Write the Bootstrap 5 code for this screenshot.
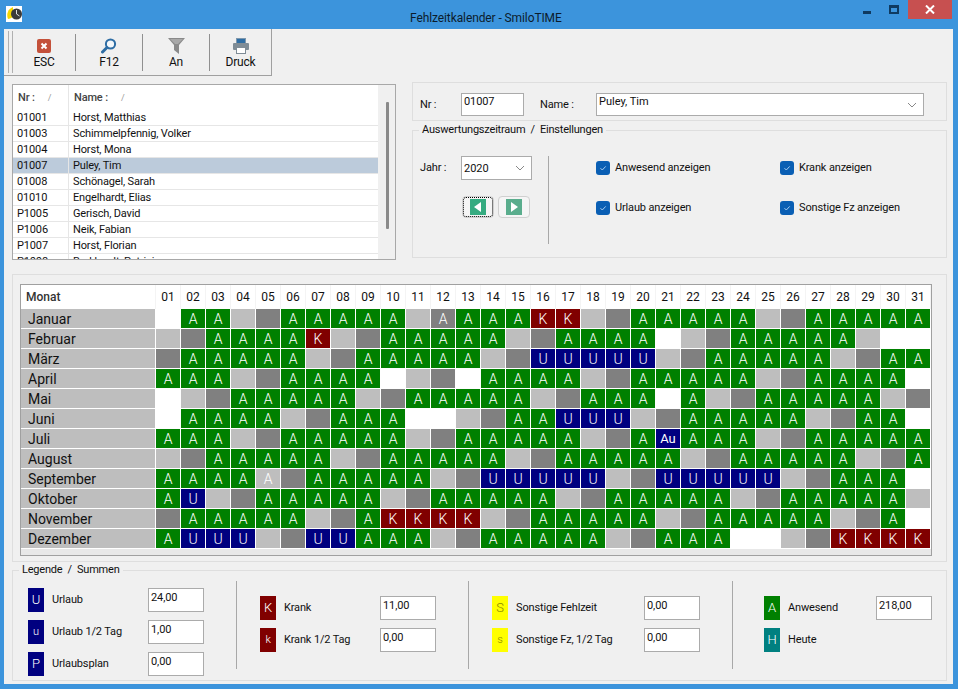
<!DOCTYPE html>
<html lang="de">
<head>
<meta charset="utf-8">
<title>Fehlzeitkalender - SmiloTIME</title>
<link href="https://cdn.jsdelivr.net/npm/bootstrap@5.3.0/dist/css/bootstrap.min.css" rel="stylesheet">
<style>
html,body{height:100%;overflow:hidden}
body{background:#3c94dc;font-family:Roboto,"Liberation Sans",sans-serif;font-size:11px;letter-spacing:-.15px;font-weight:400;color:#111;line-height:16px}
.titlebar{height:29px;position:relative}
.app-ico{margin:6px 0 0 6px}
.win-title{position:absolute;left:410px;top:10px;color:#0c1c2c;line-height:16px;font-size:12px;letter-spacing:-.1px}
.win-btns{margin-right:6px}
.win-close{width:44px;height:19px;background:#c75050}
.win-max{width:10px;height:9px;border:2px solid #0f3a60;border-top-width:3px;margin:5px 9px 0 0}
.win-min{width:8px;height:3px;background:#0f3a60;margin:11px 18px 0 0}
.content{background:#f0f0f0;margin:0 5px 0 4px;height:655px}
.tools{width:268px;height:47px;border-right:1px solid #a0a0a0;border-bottom:1px solid #a0a0a0}
.grip{width:5px;height:42px;margin:2px 0 0 4px;border-left:1px solid #b0b0b0;border-right:1px solid #b0b0b0;flex:none}
.tool{width:67px;height:37px;margin-top:5px;border-right:1px solid #909090;text-align:center;line-height:14px;flex:none;font-size:12px;letter-spacing:-.2px}
.tool svg{display:block;margin:4px auto 1px}
.tool svg.t14{margin:5px auto 2px}
.tool-first{width:63px}
.tool-last{border-right:0;width:61px}
.toprow{margin-top:6px}
.emp{width:384px;height:176px;margin:2px 16px 0 8px;border:1px solid #a8a8a8;background:#f0f0f0;position:relative;overflow:hidden;flex:none}
.emp-scroll{height:174px;overflow:hidden;width:365px;background:#fff}
.emp table{margin:0;width:365px;table-layout:fixed;border-collapse:separate;border-spacing:0;--bs-table-bg:transparent;color:#111}
.table.emp-t th,.table.emp-t td{padding:0 0 0 4px;height:16px;line-height:15px;border:0;border-bottom:1px solid #e6e6e6;font-weight:400;white-space:nowrap;overflow:hidden;box-shadow:none}
.table.emp-t td:first-child,.table.emp-t th:first-child{width:56px;border-right:1px solid #e6e6e6}
.table.emp-t thead th{height:25px;padding-left:5px;font-weight:500;border-bottom:0;color:#444;vertical-align:middle}
.table.emp-t .sel td{background:#bccbdb}
.sort{color:#999;font-size:9px;font-weight:400;margin-left:13px}
.sb{position:absolute;left:373px;top:17px;width:3px;height:127px;background:#8a8a8a;border-radius:1px}
.rightcol{width:535px;flex:none}
.pnl{border:1px solid #dedede}
.pnl-top{height:39px;margin-bottom:2px}
.lbl{display:block;white-space:nowrap}
.fld{border:1px solid #ababab;background:#fff;border-radius:0;padding:0 0 0 2px;font-size:11px;line-height:14px;color:#111;min-height:0;box-shadow:none;font-family:inherit;letter-spacing:-.1px}
.fld:focus{border-color:#ababab;box-shadow:none}
.fld-nr{width:63px;height:23px;margin:10px 0 0 0;padding-bottom:6px}
.fld-sum{width:56px;height:24px;padding-bottom:6px}
.combo{height:24px;border:1px solid #ababab;border-radius:0;padding:0 20px 8px 2px;font-size:11px;line-height:14px;color:#111;min-height:0;font-family:inherit;background-color:#fff;background-position:right 6px center;background-size:10px 6px;background-image:url("data:image/svg+xml,%3Csvg xmlns='http://www.w3.org/2000/svg' viewBox='0 0 10 6'%3E%3Cpath fill='none' stroke='%23888' d='M1 1l4 4 4-4'/%3E%3C/svg%3E")}
.combo-name{width:328px;height:23px;margin-top:10px;padding-bottom:6px}
.combo-year{width:71px;padding:1px 20px 0 2px;flex:none}
fieldset.grp{border:1px solid #dedede;padding:0;min-width:0}
fieldset.grp legend{float:none;width:auto;font-size:11px;line-height:14px;margin:0 0 0 6px;padding:0 3px;color:#111;letter-spacing:-.2px}
.grp-set{height:135px;margin:0}
.setbody{height:120px}
.yearcol{width:135px;padding:19px 0 0 7px;flex:none}
.sep-v{width:1px;background:#a8a8a8;flex:none}
.sep-set{height:88px;margin-top:19px}
.arrow-btn{width:32px;height:22px;background:#f5f5f5;border:1px solid #d0d0d0;border-radius:4px;padding:0;display:flex;align-items:center;justify-content:center}
.arrow-focus{outline:1px dotted #000;outline-offset:-2px}
.checks{margin:0 0 0 47px;width:345px;padding-top:24px;row-gap:26px;flex:none}
.chk{height:14px;margin:0;padding:0;min-height:0;width:160px}
.chk:nth-child(odd){width:184px}
.chk .form-check-input{width:14px;height:14px;margin:0 5px 0 0;float:none;border:0;border-radius:3px;background-color:#0a5fb4;background-size:10px;background-image:url("data:image/svg+xml,%3Csvg xmlns='http://www.w3.org/2000/svg' viewBox='0 0 10 10'%3E%3Cpath fill='none' stroke='%23a9cdf0' d='M2.5 5.2l1.8 1.8 3.4-3.6'/%3E%3C/svg%3E");flex:none}
.pnl-grid{height:288px;margin:14px 0 1px 8px;width:935px;padding:9px 0 0 7px}
.cal-wrap{width:912px;height:272px;border:1px solid #a0a0a0;background:#e8e8e8}
.table.cal{margin:0;width:910px;table-layout:fixed;border-collapse:separate;border-spacing:0;--bs-table-bg:transparent;letter-spacing:0;font-size:12px}
.table.cal th,.table.cal td{padding:0;height:20px;border:0;border-right:1px solid #fff;border-bottom:1px solid #fff;box-shadow:none;text-align:center;vertical-align:middle;background:#fff;font-weight:400;line-height:18px;overflow:hidden}
.table.cal tbody td{font-size:14px;font-weight:300;color:#fff}
.table.cal thead th{height:24px;background:#fff;border:0;border-right:1px solid #f4f4f4;color:#111}
.table.cal .mcol{width:135px;text-align:left}
.table.cal thead .mcol{padding-left:5px;font-weight:500;color:#333}
.table.cal tbody .mcol{padding-left:7px;background:#bebebe;color:#111;font-size:14px;font-weight:400}
.table.cal td.dA{background:#008000}
.table.cal td.dU{background:#000080}
.table.cal td.dK{background:#800000}
.table.cal td.dG{background:#bebebe}
.table.cal td.dD{background:#808080}
.table.cal td.dW{background:#fff}
.table.cal td.dS{font-size:13px;font-weight:400}
.leg-grp{margin:0 0 0 8px;width:935px;height:118px}
.leg-body{height:103px}
.leg-col{padding-left:15px}
.leg-row{height:24px;margin-bottom:8px}
.chip{width:16px;height:24px;display:flex;align-items:center;justify-content:center;color:#fff;font-size:13px;font-weight:300;margin-right:8px;flex:none}
.chip-sm{font-size:11px}
.c-u{background:#000080}.c-k{background:#800000}.c-y{background:#ff0;color:#8a8a00}.c-a{background:green}.c-h{background:teal}
.sep-leg{height:88px;margin-top:4px}
.w-a{width:223px;padding-top:11px;flex:none}
.w-b{width:231px;padding:19px 0 0 23px;flex:none}
.w-c{width:263px;padding:19px 0 0 23px;flex:none}
.w-d{padding:19px 0 0 31px}
.leg-txt{width:96px}
.leg-txt-k{width:96px}
.leg-txt-s{width:128px}
.leg-txt-a{width:88px}
</style>
</head>
<body>
<div class="titlebar d-flex justify-content-between">
  <svg class="app-ico" width="16" height="16" viewBox="0 0 16 16"><rect width="16" height="16" fill="#fff"/><path d="M7 1C2 3 0 8 2 13c1 0 3-1 5-2z" fill="#f5d800"/><circle cx="10.500" cy="8" r="5.500" fill="#3a3a3a"/><path d="M10.500 4v4l3 2" fill="none" stroke="#ddd"/></svg>
  <div class="win-title">Fehlzeitkalender - SmiloTIME</div>
  <div class="d-flex win-btns align-items-start">
    <div class="win-min"></div>
    <div class="win-max"></div>
    <div class="win-close d-flex align-items-center justify-content-center"><svg width="10" height="9" viewBox="0 0 10 9"><path d="M1 .5l8 8M9 .5l-8 8" stroke="#fff" stroke-width="2"/></svg></div>
  </div>
</div>
<div class="content">
  <div class="tools d-flex">
    <div class="grip"></div>
    <div class="tool tool-first"><svg class="t14" width="14" height="14" viewBox="0 0 14 14"><rect width="14" height="14" rx="2" fill="#c4513a"/><path d="M4.500 4.500l5 5M9.500 4.500l-5 5" stroke="#fff" stroke-width="2"/></svg>ESC</div>
    <div class="tool"><svg width="16" height="16" viewBox="0 0 16 16"><circle cx="9.500" cy="6" r="4.600" fill="#f4f8fb" stroke="#2e6da4" stroke-width="2"/><path d="M6 9.500L1.500 14" stroke="#2e6da4" stroke-width="3" stroke-linecap="round"/></svg>F12</div>
    <div class="tool"><svg width="17" height="16" viewBox="0 0 17 16"><path d="M0 0h17L11 7v9L6 12V7z" fill="#8a8a8a"/><path d="M2 1h13L10 6H7z" fill="#a8a8a8"/></svg>An</div>
    <div class="tool tool-last"><svg width="16" height="16" viewBox="0 0 16 16"><rect x="3.500" y=".5" width="9" height="5" fill="#2e6da4" stroke="#7f98ad"/><rect x="0" y="5" width="16" height="7" rx="1" fill="#7f8c96"/><rect x="3.500" y="9.500" width="9" height="6" fill="#fff" stroke="#7f8c96"/></svg>Druck</div>
  </div>
  <div class="toprow d-flex">
    <div class="emp">
      <div class="emp-scroll">
      <table class="table emp-t">
        <thead><tr><th>Nr :<span class="sort">/</span></th><th>Name :<span class="sort">/</span></th></tr></thead>
        <tbody>
          <tr><td>01001</td><td>Horst, Matthias</td></tr>
          <tr><td>01003</td><td>Schimmelpfennig, Volker</td></tr>
          <tr><td>01004</td><td>Horst, Mona</td></tr>
          <tr class="sel"><td>01007</td><td>Puley, Tim</td></tr>
          <tr><td>01008</td><td>Schönagel, Sarah</td></tr>
          <tr><td>01010</td><td>Engelhardt, Elias</td></tr>
          <tr><td>P1005</td><td>Gerisch, David</td></tr>
          <tr><td>P1006</td><td>Neik, Fabian</td></tr>
          <tr><td>P1007</td><td>Horst, Florian</td></tr>
          <tr><td>P1008</td><td>Burkhardt, Patricia</td></tr>
        </tbody>
      </table>
      </div>
      <div class="sb"></div>
    </div>
    <div class="rightcol">
      <div class="pnl pnl-top d-flex">
        <span class="lbl nr-l" style="margin:14px 0 0 7px;width:41px">Nr :</span>
        <input class="form-control fld fld-nr" value="01007">
        <span class="lbl" style="margin:14px 0 0 16px;width:56px">Name :</span>
        <select class="form-select combo combo-name"><option>Puley, Tim</option></select>
      </div>
      <fieldset class="grp grp-set">
        <legend>Auswertungszeitraum&nbsp; /&nbsp; Einstellungen</legend>
        <div class="setbody d-flex">
          <div class="yearcol">
            <div class="d-flex"><span class="lbl" style="width:41px;margin-top:4px">Jahr :</span><select class="form-select combo combo-year"><option>2020</option></select></div>
            <div class="d-flex gap-1" style="margin:16px 0 0 42px">
              <button class="arrow-btn arrow-focus" type="button" aria-label="Zurück"><svg width="16" height="16" viewBox="0 0 16 16"><rect width="16" height="16" fill="#35ab80"/><path d="M11 3v10L4 8z" fill="#fff"/></svg></button>
              <button class="arrow-btn" type="button" aria-label="Vor"><svg width="16" height="16" viewBox="0 0 16 16"><rect width="16" height="16" fill="#5aad8d"/><path d="M5 3v10l7-5z" fill="#fff"/></svg></button>
            </div>
          </div>
          <div class="sep-v sep-set"></div>
          <div class="checks d-flex flex-wrap align-content-start">
            <div class="form-check chk d-flex align-items-center"><input class="form-check-input" type="checkbox" checked id="c1"><label for="c1">Anwesend anzeigen</label></div>
            <div class="form-check chk d-flex align-items-center"><input class="form-check-input" type="checkbox" checked id="c2"><label for="c2">Krank anzeigen</label></div>
            <div class="form-check chk d-flex align-items-center"><input class="form-check-input" type="checkbox" checked id="c3"><label for="c3">Urlaub anzeigen</label></div>
            <div class="form-check chk d-flex align-items-center"><input class="form-check-input" type="checkbox" checked id="c4"><label for="c4">Sonstige Fz anzeigen</label></div>
          </div>
        </div>
      </fieldset>
    </div>
  </div>
  <div class="pnl pnl-grid">
    <div class="cal-wrap">
      <table class="table cal">
        <thead><tr id="calhead"><th class="mcol">Monat</th></tr></thead>
        <tbody id="calbody"></tbody>
      </table>
    </div>
  </div>
  <fieldset class="grp leg-grp">
    <legend>Legende&nbsp; /&nbsp; Summen</legend>
    <div class="leg-body d-flex">
      <div class="w-a leg-col">
        <div class="leg-row d-flex align-items-center"><span class="chip c-u">U</span><span class="leg-txt">Urlaub</span><input class="form-control fld fld-sum" value="24,00"></div>
        <div class="leg-row d-flex align-items-center"><span class="chip chip-sm c-u">u</span><span class="leg-txt">Urlaub 1/2 Tag</span><input class="form-control fld fld-sum" value="1,00"></div>
        <div class="leg-row d-flex align-items-center"><span class="chip c-u">P</span><span class="leg-txt">Urlaubsplan</span><input class="form-control fld fld-sum" value="0,00"></div>
      </div>
      <div class="sep-v sep-leg"></div>
      <div class="w-b">
        <div class="leg-row d-flex align-items-center"><span class="chip c-k">K</span><span class="leg-txt-k">Krank</span><input class="form-control fld fld-sum" value="11,00"></div>
        <div class="leg-row d-flex align-items-center"><span class="chip chip-sm c-k">k</span><span class="leg-txt-k">Krank 1/2 Tag</span><input class="form-control fld fld-sum" value="0,00"></div>
      </div>
      <div class="sep-v sep-leg"></div>
      <div class="w-c">
        <div class="leg-row d-flex align-items-center"><span class="chip c-y">S</span><span class="leg-txt-s">Sonstige Fehlzeit</span><input class="form-control fld fld-sum" value="0,00"></div>
        <div class="leg-row d-flex align-items-center"><span class="chip chip-sm c-y">s</span><span class="leg-txt-s">Sonstige Fz, 1/2 Tag</span><input class="form-control fld fld-sum" value="0,00"></div>
      </div>
      <div class="sep-v sep-leg"></div>
      <div class="w-d">
        <div class="leg-row d-flex align-items-center"><span class="chip c-a">A</span><span class="leg-txt-a">Anwesend</span><input class="form-control fld fld-sum" value="218,00"></div>
        <div class="leg-row d-flex align-items-center"><span class="chip c-h">H</span><span class="leg-txt-a">Heute</span></div>
      </div>
    </div>
  </fieldset>
</div>
<script>
var rows=[["Januar","wAAgdAAAAAgaAAAKKgdAAAAAgdAAAAA"],["Februar","gdAAAAKgdAAAAAgdAAAAwgdAAAAAgww"],["März","dAAAAAgdAAAAAgdUUUUUgdAAAAAgdAA"],["April","AAAgdAAAAwgdwAAAAgdAAAAAgdAAAAw"],["Mai","wgdAAAAAgdAAAAAgdAAAwAgdAAAAAgd"],["Juni","wAAAAgdAAAwwgdAAUUUgdAAAAAgdAAw"],["Juli","AAAgdAAAAAgdAAAAAgdAXAAAgdAAAAA"],["August","gdAAAAAgdAAAAAgdAAAAAgdAAAAAgdA"],["September","AAAAbdAAAAAgdUUUUUgdUUUUUgdAAAw"],["Oktober","AUgdAAAAAgdAAAAAgdAAAAAgdAAAAAg"],["November","dAAAAAgdAKKKKgdAAAAAgdAAAAAgdAw"],["Dezember","AUUUgdUUAAAgdAAAAAgdAAAwwgdKKKK"]];
var h="";for(var i=1;i<=31;i++)h+="<th>"+(i<10?"0":"")+i+"</th>";
document.getElementById("calhead").insertAdjacentHTML("beforeend",h);
var m={A:["dA","A"],U:["dU","U"],K:["dK","K"],g:["dG",""],d:["dD",""],w:["dW",""],a:["dD","A"],b:["dG","A"],X:["dU dS","Au"]};
var b="";rows.forEach(function(r){b+='<tr><td class="mcol">'+r[0]+"</td>";r[1].split("").forEach(function(c){b+='<td class="'+m[c][0]+'">'+m[c][1]+"</td>"});b+="</tr>"});
document.getElementById("calbody").innerHTML=b;
</script>
<script src="https://cdn.jsdelivr.net/npm/bootstrap@5.3.0/dist/js/bootstrap.bundle.min.js"></script>
</body>
</html>
